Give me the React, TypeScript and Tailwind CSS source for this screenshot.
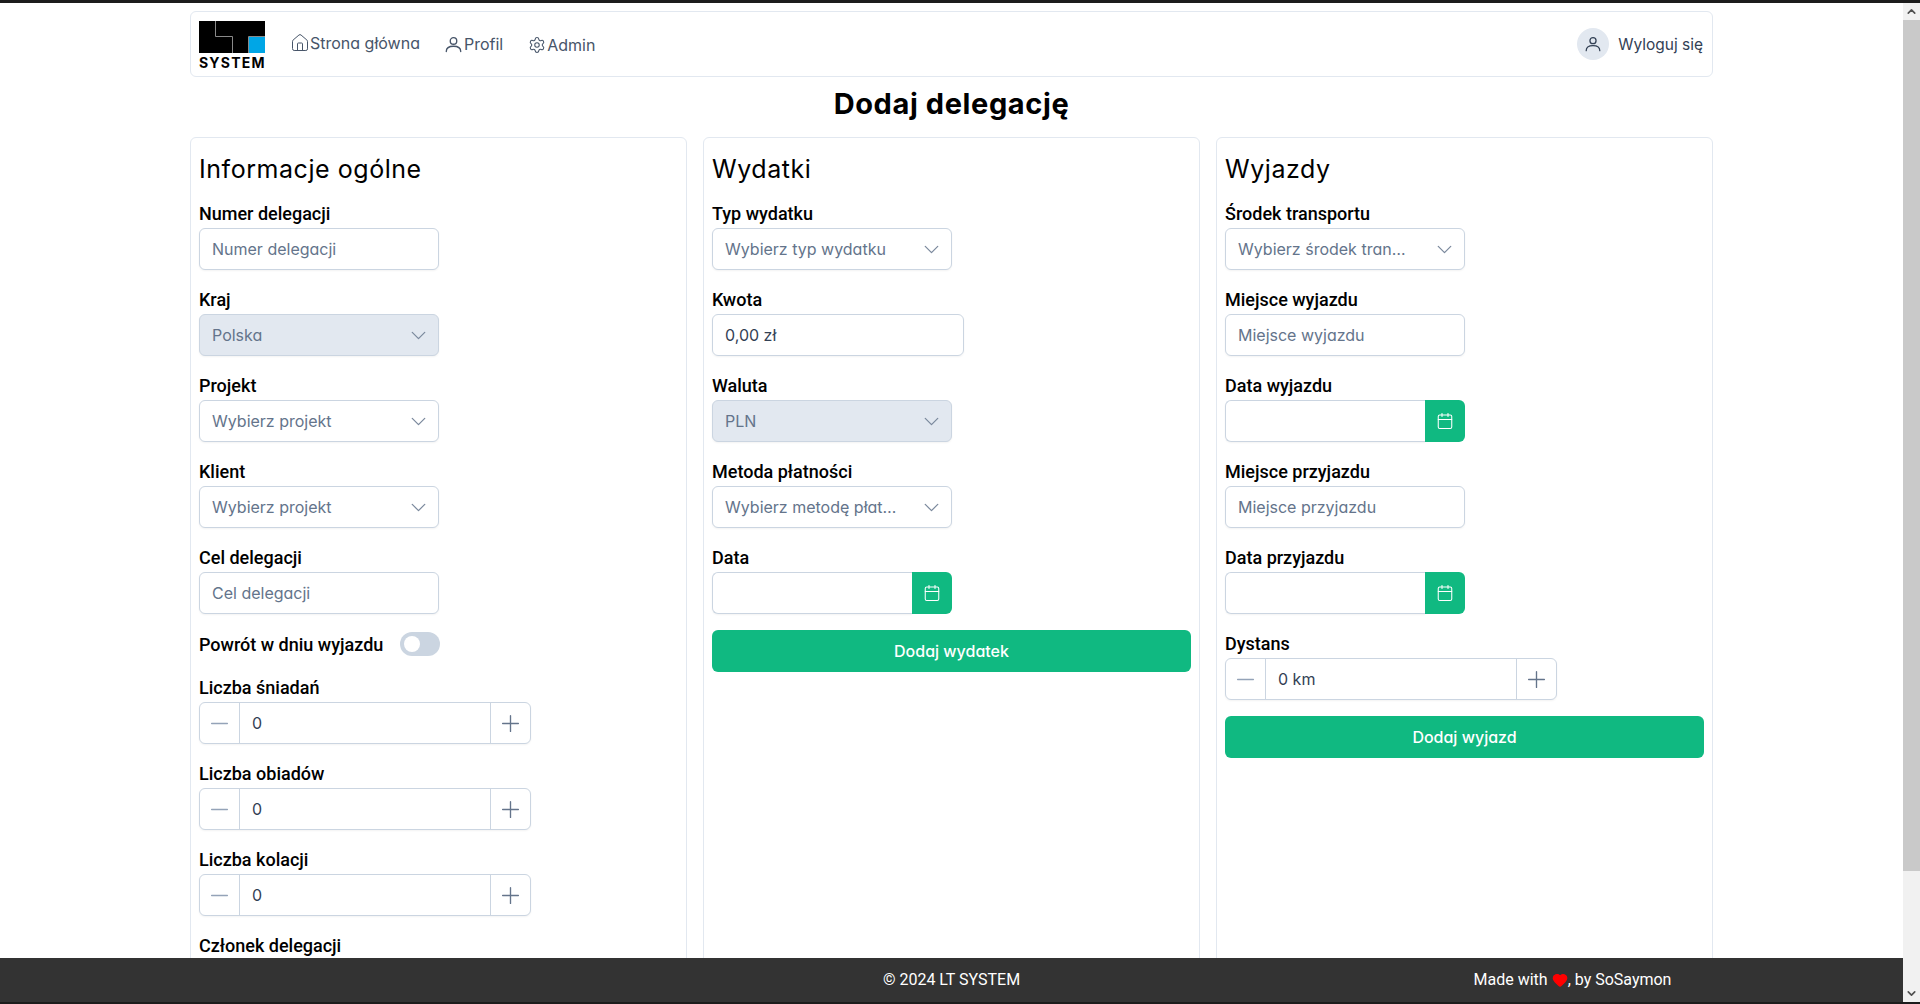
import { Calendar, ChevronDown, ChevronUp, Heart, Home, Minus, Plus, Settings } from "lucide-react";

const inter = "font-['Inter',sans-serif] [font-feature-settings:'cv11']";

function UserIcon({ size }: { size: number }) {
  return (
    <svg width={size} height={size} viewBox="0 0 24 24" fill="none" stroke="currentColor" strokeWidth="1.9" strokeLinecap="round">
      <circle cx="12" cy="7" r="4.6" />
      <path d="M1.8 22C1.8 16.6 6.2 14.5 12 14.5S22.2 16.6 22.2 22" />
    </svg>
  );
}

function Label({ children }: { children: React.ReactNode }) {
  return (
    <label className="block h-6 mb-[2px] font-['Roboto',sans-serif] font-medium text-[18px] leading-[23px] text-black">
      {children}
    </label>
  );
}

function TextField({ label, placeholder, value }: { label: string; placeholder?: string; value?: string }) {
  return (
    <div className="mb-[18px]">
      <Label>{label}</Label>
      <input
        readOnly
        placeholder={placeholder}
        value={value}
        className={`${inter} block w-[240px] h-[42px] px-3 border border-[#cbd5e1] rounded-md bg-white text-[16px] text-[#334155] placeholder:text-[#64748b] shadow-[0_1px_2px_rgba(0,0,0,0.05)] outline-none`}
      />
    </div>
  );
}

function SelectField({ label, text, disabled }: { label: string; text: string; disabled?: boolean }) {
  return (
    <div className="mb-[18px]">
      <Label>{label}</Label>
      <div
        className={`flex items-center w-[240px] h-[42px] border border-[#cbd5e1] rounded-md shadow-[0_1px_2px_rgba(0,0,0,0.05)] ${
          disabled ? "bg-[#e2e8f0]" : "bg-white"
        }`}
      >
        <span className={`${inter} flex-1 min-w-0 pl-3 pr-[14px] truncate text-[16px] text-[#64748b]`}>{text}</span>
        <span className="w-10 flex justify-center text-[#7b899d] shrink-0">
          <ChevronDown size={25} strokeWidth={1.2} />
        </span>
      </div>
    </div>
  );
}

function DateField({ label }: { label: string }) {
  return (
    <div className="mb-[18px]">
      <Label>{label}</Label>
      <div className="flex w-[240px] h-[42px]">
        <div className="flex-1 border border-r-0 border-[#cbd5e1] rounded-l-md bg-white shadow-[0_1px_2px_rgba(0,0,0,0.05)]" />
        <button className="w-10 flex items-center justify-center bg-[#10b981] rounded-r-md text-white">
          <Calendar size={18} strokeWidth={1.4} />
        </button>
      </div>
    </div>
  );
}

function NumberField({ label, value }: { label: string; value: string }) {
  return (
    <div className="mb-[18px]">
      <Label>{label}</Label>
      <div className="flex w-[332px] h-[42px] border border-[#cbd5e1] rounded-md bg-white shadow-[0_1px_2px_rgba(0,0,0,0.05)]">
        <span className="w-[39px] flex items-center justify-center text-[#94a3b8]">
          <Minus size={27} strokeWidth={1.2} />
        </span>
        <span className={`${inter} flex-1 flex items-center px-3 border-x border-[#cbd5e1] text-[16px] text-[#334155]`}>
          {value}
        </span>
        <span className="w-[39px] flex items-center justify-center text-[#64748b]">
          <Plus size={27} strokeWidth={1.2} />
        </span>
      </div>
    </div>
  );
}

function Card({ title, children }: { title: string; children: React.ReactNode }) {
  return (
    <section className="border border-[#e2e8f0] rounded-md p-2">
      <h2 className="h-[47px] mb-[9px] flex items-center font-['Inter',sans-serif] font-normal text-[25px] tracking-[0.55px] text-black">
        {title}
      </h2>
      {children}
    </section>
  );
}

function PrimaryButton({ children }: { children: React.ReactNode }) {
  return (
    <button className={`${inter} block w-full h-[42px] -mt-[2px] rounded-md bg-[#10b981] text-white text-[16px] font-medium`}>
      {children}
    </button>
  );
}

function Logo() {
  return (
    <div className="w-[66px] h-[47px] flex flex-col">
      <svg width="66" height="32" viewBox="0 0 66 32" className="shrink-0">
        <rect width="66" height="32" fill="#000" />
        <path d="M16.5 0V15.5H33.5V32M49.5 32V15.5H66" stroke="#8a8a8a" strokeWidth="1" fill="none" />
        <rect x="50" y="16" width="16" height="16" fill="#00a6e6" />
      </svg>
      <span className="mt-[3px] font-['Inter',sans-serif] font-bold text-[14px] leading-[14px] tracking-[1.2px] text-black whitespace-nowrap">
        SYSTEM
      </span>
    </div>
  );
}

export default function App() {
  return (
    <div className="h-screen flex flex-col overflow-hidden bg-white">
      <div className="h-[3px] shrink-0 bg-[#1c1c1c]" />

      <div className="flex-1 min-h-0 flex">
        <div className="flex-1 min-w-0 flex flex-col">
          <main className="flex-1 min-h-0 overflow-hidden">
            <div className="w-[1523px] mx-auto pt-2">
              {/* Navbar */}
              <header className="h-[66px] flex items-center justify-between border border-[#e2e8f0] rounded-md pl-2 pr-[9px]">
                <div className={`${inter} flex items-center text-[16px] text-[#475569]`}>
                  <Logo />
                  <a className="ml-[25px] flex items-center -translate-y-[1px]">
                    <span className="w-5 flex">
                      <Home size={20} strokeWidth={1.2} />
                    </span>
                    Strona główna
                  </a>
                  <a className="ml-[25px] flex items-center">
                    <span className="w-[19px] flex">
                      <UserIcon size={17} />
                    </span>
                    Profil
                  </a>
                  <a className="ml-[25px] flex items-center translate-y-[1px]">
                    <span className="w-[19px] flex">
                      <Settings size={18} strokeWidth={1.4} />
                    </span>
                    Admin
                  </a>
                </div>
                <div className={`${inter} flex items-center gap-[9px] text-[15.5px] text-[#334155]`}>
                  <span className="w-8 h-8 rounded-full bg-[#e2e8f0] flex items-center justify-center">
                    <UserIcon size={16} />
                  </span>
                  <span className="translate-y-[1px]">Wyloguj się</span>
                </div>
              </header>

              <h1 className="h-[54px] mb-[6px] flex items-center justify-center font-['Inter',sans-serif] font-bold text-[29px] tracking-[0.6px] text-black">
                Dodaj delegację
              </h1>

              <div className="grid grid-cols-3 gap-4 h-[1000px]">
                <Card title="Informacje ogólne">
                  <TextField label="Numer delegacji" placeholder="Numer delegacji" />
                  <SelectField label="Kraj" text="Polska" disabled />
                  <SelectField label="Projekt" text="Wybierz projekt" />
                  <SelectField label="Klient" text="Wybierz projekt" />
                  <TextField label="Cel delegacji" placeholder="Cel delegacji" />
                  <div className="flex items-center h-6 mb-5">
                    <span className="font-['Roboto',sans-serif] font-medium text-[18px] leading-[23px] text-black">
                      Powrót w dniu wyjazdu
                    </span>
                    <span className="ml-[17px] w-10 h-6 rounded-full bg-[#cbd5e1] flex items-center pl-1">
                      <span className="w-4 h-4 rounded-full bg-white" />
                    </span>
                  </div>
                  <NumberField label="Liczba śniadań" value="0" />
                  <NumberField label="Liczba obiadów" value="0" />
                  <NumberField label="Liczba kolacji" value="0" />
                  <Label>Członek delegacji</Label>
                </Card>

                <Card title="Wydatki">
                  <SelectField label="Typ wydatku" text="Wybierz typ wydatku" />
                  <div className="mb-[18px]">
                    <Label>Kwota</Label>
                    <input
                      readOnly
                      value="0,00 zł"
                      className={`${inter} block w-[252px] h-[42px] px-3 border border-[#cbd5e1] rounded-md text-[16px] text-[#334155] shadow-[0_1px_2px_rgba(0,0,0,0.05)] outline-none`}
                    />
                  </div>
                  <SelectField label="Waluta" text="PLN" disabled />
                  <SelectField label="Metoda płatności" text="Wybierz metodę płatności" />
                  <DateField label="Data" />
                  <PrimaryButton>Dodaj wydatek</PrimaryButton>
                </Card>

                <Card title="Wyjazdy">
                  <SelectField label="Środek transportu" text="Wybierz środek transportu" />
                  <TextField label="Miejsce wyjazdu" placeholder="Miejsce wyjazdu" />
                  <DateField label="Data wyjazdu" />
                  <TextField label="Miejsce przyjazdu" placeholder="Miejsce przyjazdu" />
                  <DateField label="Data przyjazdu" />
                  <NumberField label="Dystans" value="0 km" />
                  <PrimaryButton>Dodaj wyjazd</PrimaryButton>
                </Card>
              </div>
            </div>
          </main>

          <footer className="h-[44px] shrink-0 bg-[#333333] px-5 grid grid-cols-3 items-center font-['Roboto',sans-serif] text-[16px] text-white">
            <span />
            <span className="text-center">© 2024 LT SYSTEM</span>
            <span className="flex items-center justify-center whitespace-pre">
              Made with <Heart size={16} fill="#ff0000" stroke="#ff0000" strokeWidth={2} />, by SoSaymon
            </span>
          </footer>
        </div>

        {/* Page scrollbar */}
        <div className="w-[17px] shrink-0 flex flex-col bg-[#f1f1f1] text-[#505050]">
          <span className="h-[17px] flex items-center justify-center">
            <ChevronUp size={13} strokeWidth={3} />
          </span>
          <span className="h-[851px] bg-[#c9c9c9]" />
          <span className="mt-auto h-[17px] flex items-center justify-center">
            <ChevronDown size={13} strokeWidth={3} />
          </span>
        </div>
      </div>

      <div className="h-[2px] shrink-0 bg-[#1c1c1c]" />
    </div>
  );
}
